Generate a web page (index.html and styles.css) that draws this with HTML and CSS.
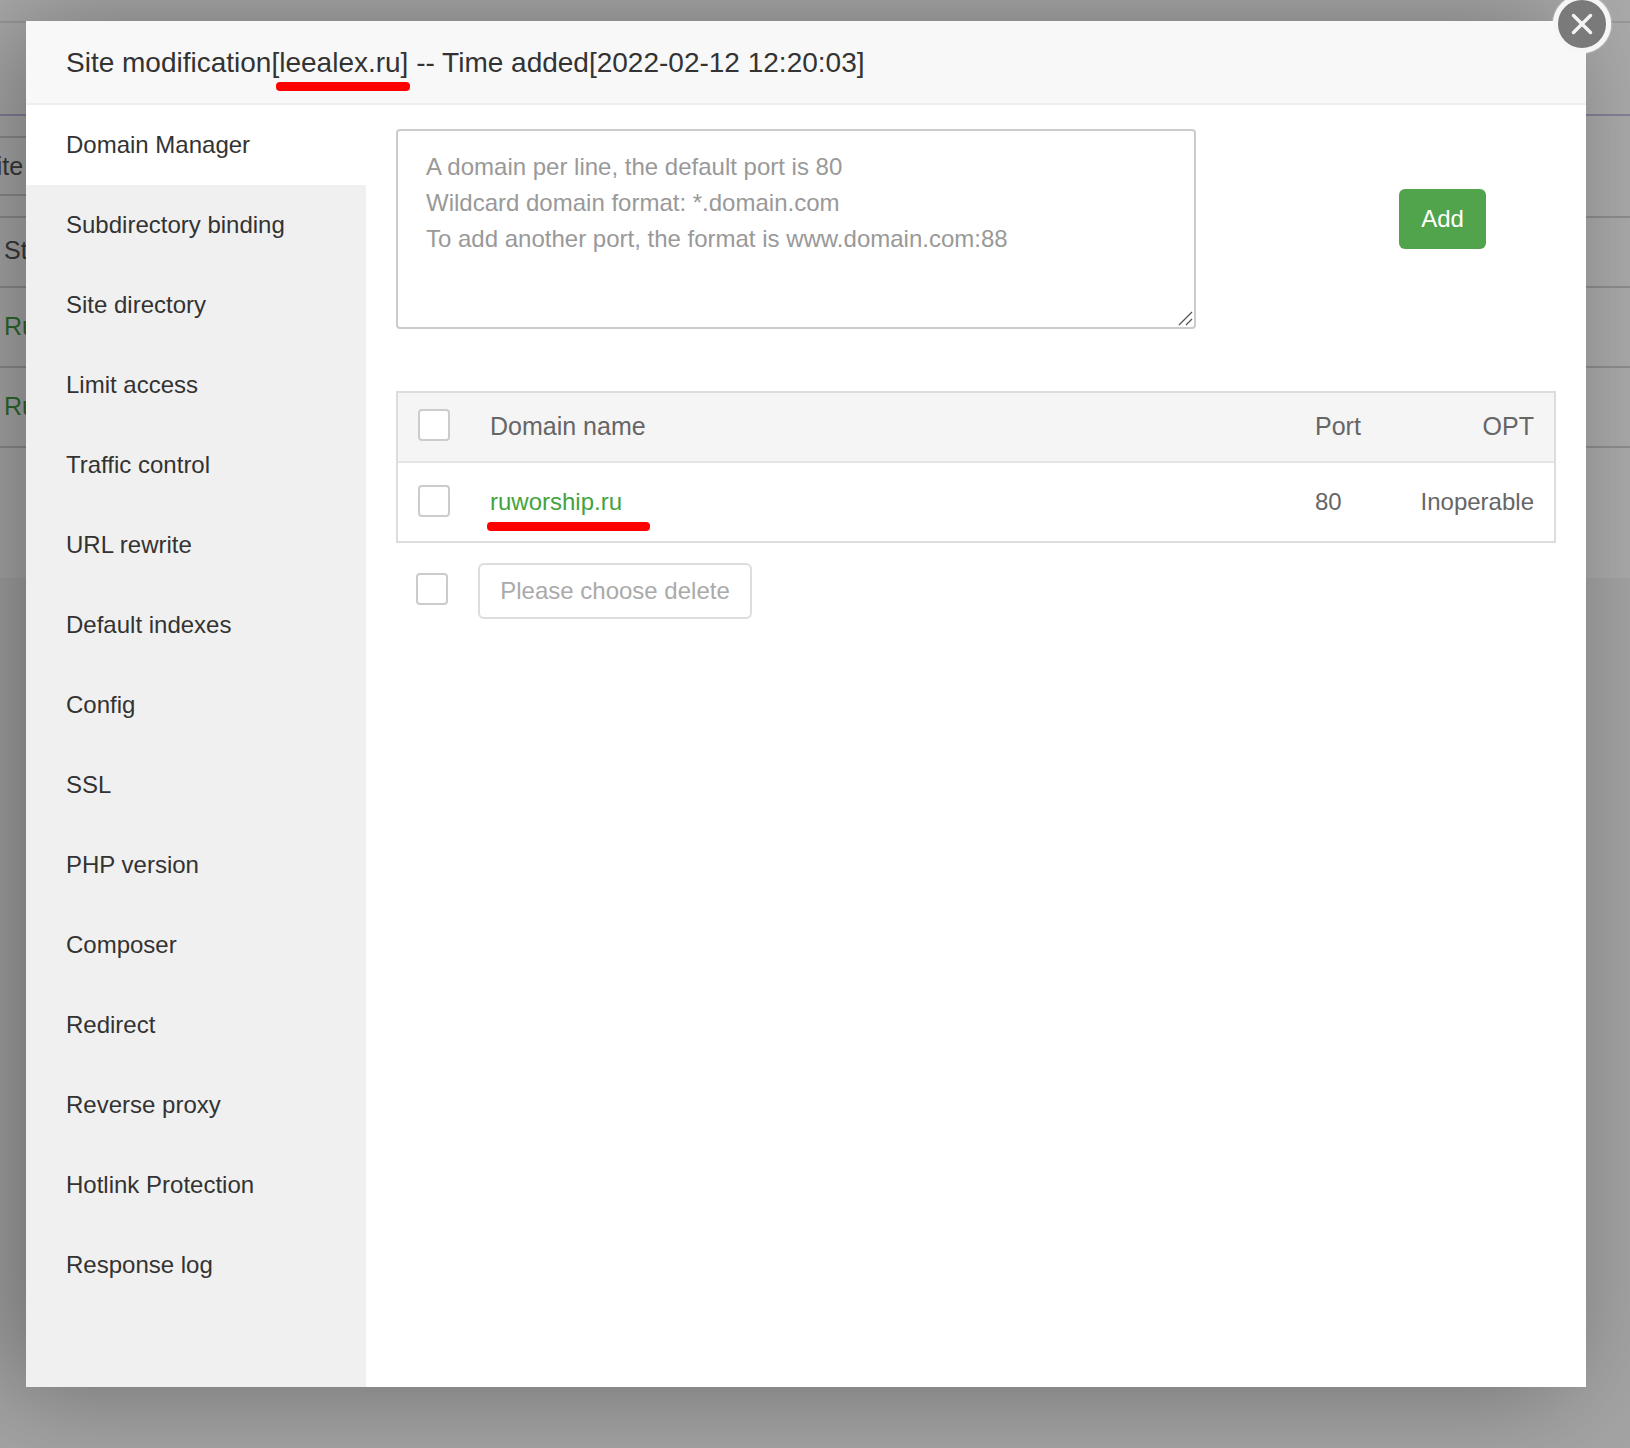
FILE: index.html
```html
<!DOCTYPE html>
<html lang="en">
<head>
<meta charset="utf-8">
<title>Site modification</title>
<link rel="stylesheet" href="styles.css">
</head>
<body>
<div class="page">
  <div class="bg-content">
    <div class="bg-row bg-top"></div>
    <div class="bg-row bg-nav"></div>
    <div class="bg-row bg-tabs"></div>
    <div class="bg-row bg-site"><span>Site</span></div>
    <div class="bg-row bg-gap"></div>
    <div class="bg-row bg-head"><span>St</span></div>
    <div class="bg-row bg-run"><span class="bg-green">Ru</span></div>
    <div class="bg-row bg-run"><span class="bg-green">Ru</span></div>
  </div>
  <div class="modal">
    <header class="modal-title">Site modification<span class="mark-wrap">[leealex.ru]<i class="mark mark-title"></i></span> -- Time added[2022-02-12 12:20:03]</header>
    <div class="modal-body">
      <nav class="side">
        <a class="side-item active">Domain Manager</a>
        <a class="side-item">Subdirectory binding</a>
        <a class="side-item">Site directory</a>
        <a class="side-item">Limit access</a>
        <a class="side-item">Traffic control</a>
        <a class="side-item">URL rewrite</a>
        <a class="side-item">Default indexes</a>
        <a class="side-item">Config</a>
        <a class="side-item">SSL</a>
        <a class="side-item">PHP version</a>
        <a class="side-item">Composer</a>
        <a class="side-item">Redirect</a>
        <a class="side-item">Reverse proxy</a>
        <a class="side-item">Hotlink Protection</a>
        <a class="side-item">Response log</a>
      </nav>
      <main class="content">
        <div class="add-row">
          <div class="domain-input">A domain per line, the default port is 80<br>Wildcard domain format: *.domain.com<br>To add another port, the format is www.domain.com:88
            <svg class="grip" width="16" height="16" viewBox="0 0 16 16"><path d="M2 15 L15 2 M9 15 L15 9" stroke="#555" stroke-width="1.3" fill="none"/></svg>
          </div>
          <button class="btn-add">Add</button>
        </div>
        <div class="table">
          <div class="tr th">
            <div class="col-check"><span class="check"></span></div>
            <div class="col-name">Domain name</div>
            <div class="col-port">Port</div>
            <div class="col-opt">OPT</div>
          </div>
          <div class="tr td">
            <div class="col-check"><span class="check"></span></div>
            <div class="col-name"><span class="mark-wrap domain">ruworship.ru<i class="mark mark-domain"></i></span></div>
            <div class="col-port">80</div>
            <div class="col-opt">Inoperable</div>
          </div>
        </div>
        <div class="batch">
          <span class="check batch-check"></span>
          <button class="btn-delete">Please choose delete</button>
        </div>
      </main>
    </div>
    <button class="close" aria-label="Close">
      <svg width="24" height="24" viewBox="0 0 24 24"><path d="M3.5 3.5 L20.5 20.5 M20.5 3.5 L3.5 20.5" stroke="#f4f4f4" stroke-width="3.4" stroke-linecap="round" fill="none"/></svg>
    </button>
  </div>
</div>
</body>
</html>
```
FILE: styles.css
```css
* { box-sizing: border-box; }
html, body { margin: 0; height: 100%; }
body { font-family: "Liberation Sans", Arial, sans-serif; background: #a4a4a4; overflow: hidden; }
.page { position: relative; width: 1630px; height: 1448px; overflow: hidden; }
.bg-content { height: 578px; background: #ababab; display: flex; flex-direction: column; }
.bg-row { position: relative; border-bottom: 2px solid #8e8e8e; font-size: 25px; color: #3a3a3a; display: flex; align-items: center; }
.bg-top { height: 23px; border-bottom-color: #9a9a9a; }
.bg-nav { height: 93px; border-bottom-color: #83829a; }
.bg-tabs { height: 22px; border-bottom: 0; }
.bg-tabs::after, .bg-site::after { content: ""; position: absolute; left: 0; bottom: 0; width: 40px; height: 2px; background: #8e8e8e; }
.bg-site { height: 58px; padding-bottom: 2px; border-bottom: 0; }
.bg-site span { margin-left: -20px; }
.bg-gap { height: 22px; }
.bg-head { height: 70px; padding-bottom: 3px; }
.bg-head span { margin-left: 4px; }
.bg-run { height: 80px; padding-bottom: 2px; }
.bg-run span { margin-left: 4px; }
.bg-green { color: #2f6b2f; }
.modal { position: absolute; left: 26px; top: 21px; width: 1560px; height: 1366px; background: #fff; display: flex; flex-direction: column; box-shadow: -20px 0 100px rgba(0,0,0,.34); }
.modal-title { height: 84px; background: #f8f8f8; border-bottom: 2px solid #eee; padding-left: 40px; font-size: 28px; line-height: 84px; color: #333; white-space: nowrap; }
.mark-wrap { position: relative; display: inline-block; }
.mark { position: absolute; background: #f00; border-radius: 4px; height: 9px; }
.mark-title { left: 5px; top: 61px; width: 134px; }
.mark-domain { left: -3px; top: 34px; width: 163px; }
.modal-body { flex: 1; display: flex; min-height: 0; }
.side { width: 340px; background: #f0f0f0; display: flex; flex-direction: column; }
.side-item { height: 80px; padding-left: 40px; font-size: 24px; line-height: 80px; color: #333; }
.side-item.active { background: #fff; }
.content { flex: 1; padding: 24px 30px 0 30px; }
.add-row { display: flex; align-items: flex-start; }
.domain-input { position: relative; width: 800px; height: 200px; border: 2px solid #ccc; border-radius: 4px; padding: 18px 28px; font-size: 24px; line-height: 36px; color: #999; }
.grip { position: absolute; right: 1px; bottom: 1px; }
.btn-add { margin: 60px 0 0 203px; width: 87px; height: 60px; border: 0; border-radius: 6px; background: #52a44c; color: #fff; font: 24px "Liberation Sans", Arial, sans-serif; }
.table { margin-top: 62px; width: 1160px; border: 2px solid #ddd; }
.tr { display: flex; align-items: center; color: #666; }
.th { height: 70px; padding-bottom: 2px; background: #f5f5f5; border-bottom: 2px solid #e5e5e5; font-size: 25px; }
.th .col-check { padding-bottom: 3px; }
.td { height: 78px; font-size: 24px; }
.td .col-check { padding-bottom: 2px; }
.col-check { width: 92px; padding-left: 20px; display: flex; }
.col-name { flex: 1; }
.col-port { width: 76px; }
.col-opt { width: 163px; padding-right: 20px; text-align: right; }
.domain { color: #43a340; }
.check { display: block; width: 32px; height: 32px; background: #fff; border: 2px solid #ccc; border-radius: 4px; }
.batch { margin-top: 20px; padding-left: 20px; display: flex; align-items: flex-start; gap: 30px; }
.batch-check { margin-top: 10px; }
.btn-delete { width: 274px; height: 56px; background: #fff; border: 2px solid #ddd; border-radius: 6px; color: #aaa; font: 24px "Liberation Sans", Arial, sans-serif; padding: 0; }
.close { position: absolute; right: -25px; top: -26px; width: 58px; height: 58px; border-radius: 50%; border: 5px solid #f6f6f6; background: #7a7a7a; box-shadow: 0 0 2px #fff; padding: 0; display: flex; align-items: center; justify-content: center; }
```
